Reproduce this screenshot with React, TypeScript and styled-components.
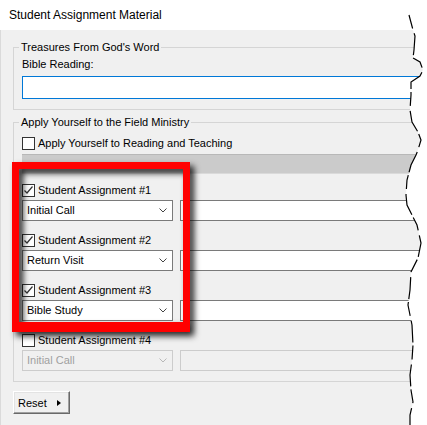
import React from "react";
import styled, { createGlobalStyle } from "styled-components";

// jagged right edge of the cut-out screenshot
const TEAR: [number, number][] = [
  [410, 0], [409, 15], [413, 30], [415, 36], [414, 50], [413, 58], [420, 62],
  [423, 70], [420, 76], [411, 82], [411, 95], [410, 110], [412, 122], [418, 132],
  [421, 140], [418, 150], [416, 155], [411, 165], [407, 180], [406, 195], [407, 205],
  [412, 215], [417, 225], [421, 243], [418, 258], [411, 272], [410, 290], [408, 305],
  [410, 315], [412, 325], [413, 345], [412, 360], [410, 375], [411, 390], [413, 402],
  [410, 415], [410, 425],
];

const clipPoints = ["0 0", ...TEAR.map(([x, y]) => `${x}px ${y}px`), "0 425px"].join(", ");

const GlobalStyle = createGlobalStyle`
  html, body {
    margin: 0;
    padding: 0;
    background: #fff;
  }
  body {
    font-family: "Liberation Sans", Arial, sans-serif;
    font-size: 11px;
    color: #000;
  }
`;

const Frame = styled.div`
  position: relative;
  width: 427px;
  height: 425px;
  overflow: hidden;
  background: #fff;
`;

const Window = styled.div`
  width: 440px;
  height: 425px;
  display: flex;
  flex-direction: column;
  clip-path: polygon(${clipPoints});
`;

const TitleBar = styled.div`
  height: 30px;
  flex: none;
  display: flex;
  align-items: center;
  padding-left: 9px;
  background: #fff;
  font-size: 12px;
`;

const Body = styled.div`
  flex: 1;
  display: flex;
  flex-direction: column;
  align-items: flex-start;
  padding: 10px 0 0 12px;
  background: #f0f0f0;
  border-left: 1px solid #dadada;
`;

const Group = styled.fieldset<{ $spaced?: boolean; $padTop: number }>`
  margin: ${({ $spaced }) => ($spaced ? "5px" : "0")} 0 0 0;
  padding: ${({ $padTop }) => $padTop}px 0 10px 8px;
  width: 430px;
  min-width: 0;
  box-sizing: border-box;
  border: 1px solid #d5d5d5;
  display: flex;
  flex-direction: column;
  align-items: flex-start;
`;

const Caption = styled.legend`
  padding: 0 2px;
  margin-left: -3px;
  line-height: 15px;
`;

const Label = styled.div`
  line-height: 15px;
  margin-bottom: 4px;
`;

const TextInput = styled.div<{ $focused?: boolean; $disabled?: boolean }>`
  height: ${({ $focused }) => ($focused ? 23 : 21)}px;
  box-sizing: border-box;
  border: 1px solid
    ${({ $focused, $disabled }) => ($focused ? "#0078d7" : $disabled ? "#cccccc" : "#7a7a7a")};
  background: ${({ $disabled }) => ($disabled ? "#f0f0f0" : "#fff")};
  align-self: stretch;
`;

const SideInput = styled(TextInput)`
  flex: 1;
`;

const CheckRow = styled.label<{ $muted?: boolean }>`
  display: flex;
  align-items: center;
  height: 16px;
  line-height: 15px;
  color: ${({ $muted }) => ($muted ? "#6d6d6d" : "#000")};
`;

const Box = styled.span`
  width: 13px;
  height: 13px;
  box-sizing: border-box;
  border: 1px solid #333;
  background: #fff;
  margin-right: 3px;
  display: flex;
  align-items: center;
  justify-content: center;
`;

const GrayBar = styled.div`
  margin-top: 3px;
  height: 20px;
  align-self: stretch;
  box-sizing: border-box;
  background: #cbcbcb;
  border-top: 1px solid #b8b8b8;
  border-bottom: 1px solid #dadada;
`;

const Assignment = styled.div<{ $first?: boolean }>`
  margin-top: ${({ $first }) => ($first ? 8 : 11)}px;
  display: flex;
  flex-direction: column;
  align-self: stretch;
`;

const FieldRow = styled.div`
  margin-top: 2px;
  display: flex;
  gap: 7px;
`;

const Combo = styled.div<{ $disabled?: boolean }>`
  width: 151px;
  height: 21px;
  flex: none;
  box-sizing: border-box;
  border: 1px solid ${({ $disabled }) => ($disabled ? "#cccccc" : "#7a7a7a")};
  background: ${({ $disabled }) => ($disabled ? "#f0f0f0" : "#fff")};
  color: ${({ $disabled }) => ($disabled ? "#a0a0a0" : "#000")};
  display: flex;
  align-items: center;
  justify-content: space-between;
  padding: 0 5px 0 4px;
`;

const ComboText = styled.span`
  line-height: 15px;
`;

const ResetButton = styled.button`
  margin: 9px 0 0 0;
  width: 57px;
  height: 23px;
  box-sizing: border-box;
  display: flex;
  align-items: center;
  justify-content: space-between;
  padding: 0 8px 0 4px;
  font: inherit;
  color: #000;
  background: #f0f0f0;
  border: 1px solid;
  border-color: #fff #696969 #696969 #fff;
  box-shadow: inset -1px -1px #a0a0a0, inset 1px 1px #e3e3e3;
`;

const Arrow = styled.span`
  width: 0;
  height: 0;
  border-top: 3px solid transparent;
  border-bottom: 3px solid transparent;
  border-left: 4px solid #000;
`;

// the red highlight drawn over the screenshot
const Highlight = styled.div`
  position: absolute;
  left: 12px;
  top: 162px;
  width: 178px;
  height: 170px;
  box-sizing: border-box;
  border: 7px solid #ff0000;
  border-bottom-width: 10px;
  filter: drop-shadow(4px 4px 3px rgba(0, 0, 0, 0.85));
  pointer-events: none;
`;

const TearLine = styled.svg`
  position: absolute;
  left: 0;
  top: 0;
  pointer-events: none;
`;

const Check = () => (
  <svg width="11" height="11" viewBox="0 0 11 11">
    <polyline points="1.5,5.5 4,8 9.5,1.5" fill="none" stroke="#333" strokeWidth="1.2" />
  </svg>
);

const Chevron = ({ muted }: { muted?: boolean }) => (
  <svg width="8" height="5" viewBox="0 0 8 5">
    <polyline points="0.5,0.5 4,4 7.5,0.5" fill="none" stroke={muted ? "#b8b8b8" : "#444"} strokeWidth="1" />
  </svg>
);

const assignments = [
  { n: 1, value: "Initial Call", checked: true },
  { n: 2, value: "Return Visit", checked: true },
  { n: 3, value: "Bible Study", checked: true },
  { n: 4, value: "Initial Call", checked: false },
];

export default function App() {
  return (
    <Frame>
      <GlobalStyle />
      <Window>
        <TitleBar>Student Assignment Material</TitleBar>
        <Body>
          <Group $padTop={2}>
            <Caption>Treasures From God's Word</Caption>
            <Label>Bible Reading:</Label>
            <TextInput $focused />
          </Group>
          <Group $spaced $padTop={5}>
            <Caption>Apply Yourself to the Field Ministry</Caption>
            <CheckRow>
              <Box />
              Apply Yourself to Reading and Teaching
            </CheckRow>
            <GrayBar />
            {assignments.map((a, i) => (
              <Assignment key={a.n} $first={i === 0}>
                <CheckRow>
                  <Box>{a.checked && <Check />}</Box>
                  Student Assignment #{a.n}
                </CheckRow>
                <FieldRow>
                  <Combo $disabled={!a.checked}>
                    <ComboText>{a.value}</ComboText>
                    <Chevron muted={!a.checked} />
                  </Combo>
                  <SideInput $disabled={!a.checked} />
                </FieldRow>
              </Assignment>
            ))}
          </Group>
          <ResetButton>
            Reset
            <Arrow />
          </ResetButton>
        </Body>
      </Window>
      <Highlight />
      <TearLine width="427" height="425" viewBox="0 0 427 425">
        <polyline
          points={TEAR.slice(1).map(([x, y]) => `${x},${y}`).join(" ")}
          fill="none"
          stroke="#000"
          strokeWidth="1.2"
          strokeDasharray="14 5 22 3"
        />
      </TearLine>
    </Frame>
  );
}
